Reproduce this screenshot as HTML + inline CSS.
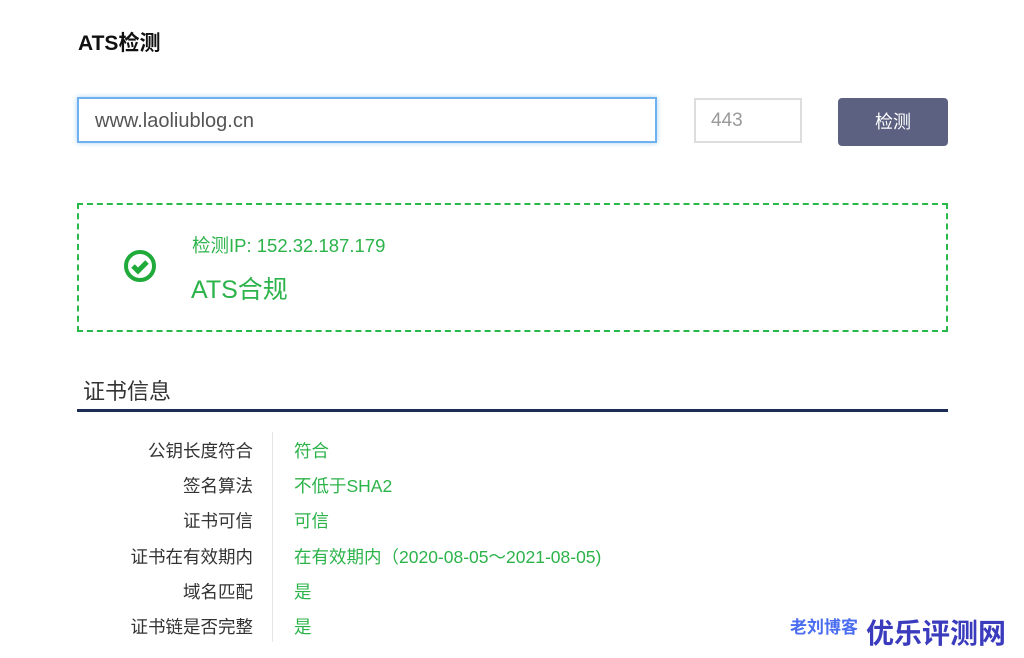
<!DOCTYPE html>
<html><head><meta charset="utf-8"><style>
body{margin:0;width:1024px;height:658px;background:#fff;font-family:"Liberation Sans","Noto Sans CJK SC",sans-serif;position:relative;overflow:hidden}
.a{position:absolute}
</style></head><body>
<div class="a" style="left:78px;top:27px;font-size:21px;font-weight:bold;color:#111">ATS检测</div>
<div class="a" style="left:77px;top:97px;width:580px;height:46px;border:2px solid #6fb1ec;box-shadow:0 0 5px #a8d2f6;box-sizing:border-box"></div>
<div class="a" style="left:95px;top:110px;font-size:20px;color:#555">www.laoliublog.cn</div>
<div class="a" style="left:694px;top:98px;width:108px;height:45px;border:2px solid #ddd;box-sizing:border-box"></div>
<div class="a" style="left:711px;top:110px;font-size:19px;color:#999">443</div>
<div class="a" style="left:838px;top:98px;width:110px;height:48px;background:#5c6181;border-radius:4px;color:#fff;font-size:18px;text-align:center;line-height:48px">检测</div>
<div class="a" style="left:77px;top:203px;width:871px;height:129px;border:2px dashed #29b84a;box-sizing:border-box"></div>
<svg class="a" style="left:122px;top:248px" width="36" height="36" viewBox="0 0 36 36"><circle cx="18" cy="18" r="14" fill="none" stroke="#1faa3a" stroke-width="4"/><path d="M11 18l5 5 9-9" fill="none" stroke="#1faa3a" stroke-width="5"/></svg>
<div class="a" style="left:192px;top:232px;font-size:18.5px;color:#2cb34a">检测IP: 152.32.187.179</div>
<div class="a" style="left:191px;top:270px;font-size:25px;color:#2cb34a">ATS合规</div>
<div class="a" style="left:83px;top:374px;font-size:22px;color:#333">证书信息</div>
<div class="a" style="left:77px;top:409px;width:871px;height:3px;background:#1d2c55"></div>
<div class="a" style="left:272px;top:432px;width:1px;height:210px;background:#e5e5e5"></div>
<div class="a" style="left:40px;top:434px;width:213px;text-align:right;font-size:17.5px;color:#333;line-height:35.2px">公钥长度符合<br>签名算法<br>证书可信<br>证书在有效期内<br>域名匹配<br>证书链是否完整</div>
<div class="a" style="left:294px;top:434px;font-size:17.5px;color:#2cb34a;line-height:35.2px;white-space:nowrap">符合<br>不低于SHA2<br>可信<br>在有效期内（2020-08-05～2021-08-05)<br>是<br>是</div>
<div class="a" style="left:790px;top:613px;font-size:17px;font-weight:bold;color:#4a6cf0">老刘博客</div>
<div class="a" style="left:866px;top:612px;font-size:28px;font-weight:bold;color:#3b3bbd">优乐评测网</div>
</body></html>
